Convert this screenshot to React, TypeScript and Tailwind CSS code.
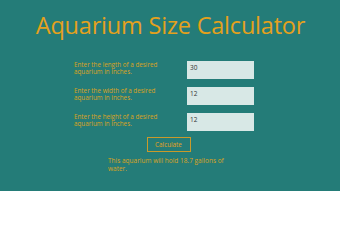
export default function App() {
  const rows = [
    { label: "Enter the length of a desired aquarium in inches.", value: "30" },
    { label: "Enter the width of a desired aquarium in inches.", value: "12" },
    { label: "Enter the height of a desired aquarium in inches.", value: "12" },
  ];
  return (
    <div className="w-[340px] h-[217px] bg-white" style={{ fontFamily: '"Open Sans", "Noto Sans", sans-serif' }}>
      <div className="h-[191px] bg-[#247c78] flex flex-col">
        <h1 className="text-[23.5px] leading-[25px] text-[#e5a11c] text-center pt-[13px] pl-[1px] tracking-[-0.2px]">
          Aquarium Size Calculator
        </h1>
        <div className="flex flex-col gap-[8px] mt-[23px] pl-[74px]">
          {rows.map((r) => (
            <div key={r.label} className="flex h-[18px]">
              <div className="w-[113px] text-[6.3px] leading-[7px] text-[#dba31f] pr-[10px]">{r.label}</div>
              <div className="w-[67px] h-[18px] bg-[#d8e8e6] text-[6.5px] text-[#333] pl-[3px] pt-[3px] leading-[7px]">
                {r.value}
              </div>
            </div>
          ))}
        </div>
        <div className="flex justify-center mt-[6px] pr-[3px]">
          <div className="w-[44px] h-[15px] border border-[#c99a2a] text-[6.3px] leading-[13px] text-center text-[#e5a11c]">
            Calculate
          </div>
        </div>
        <div className="pl-[108px] w-[232px] mt-[5px] text-[6.5px] leading-[8px] text-[#dba31f]">
          This aquarium will hold 18.7 gallons of water.
        </div>
      </div>
    </div>
  );
}
